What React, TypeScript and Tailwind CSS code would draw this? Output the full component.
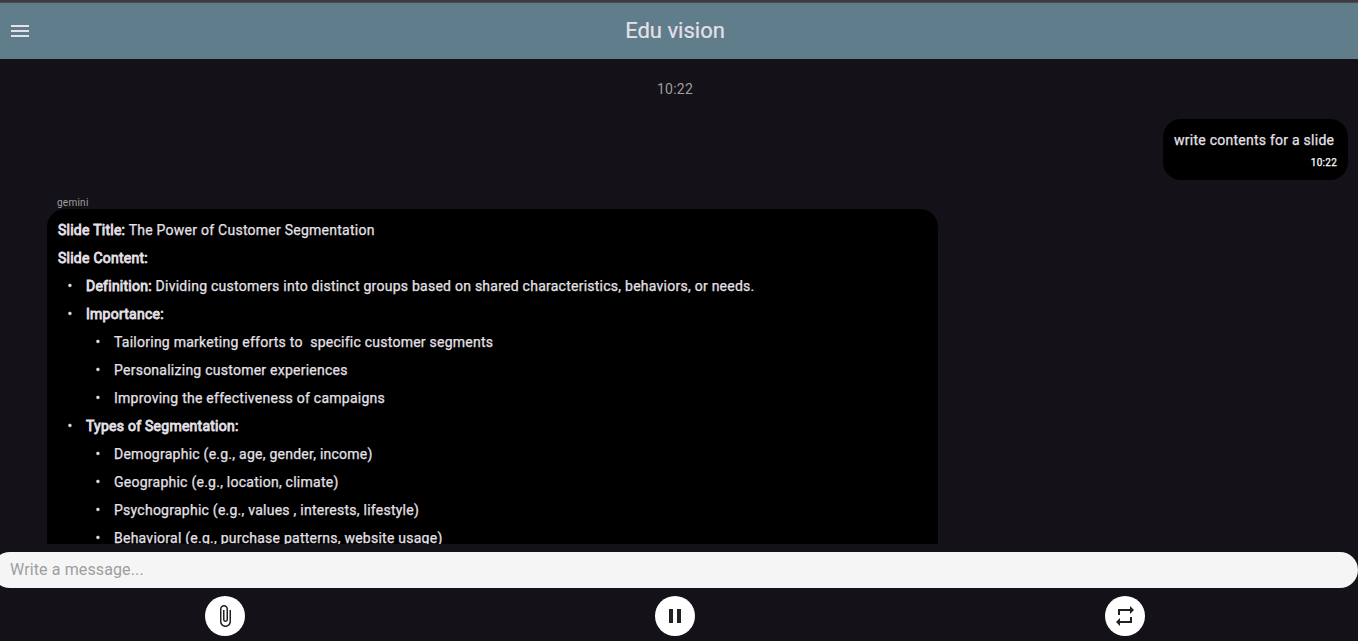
import type { ReactNode } from "react";

function Row({ level = 0, children }: { level?: 0 | 1 | 2; children: ReactNode }) {
  return (
    <div className={`flex h-5 shrink-0 items-center whitespace-pre ${level === 2 ? "pl-7" : ""}`}>
      {level > 0 && <span className="w-7 shrink-0 pr-1 text-center">•</span>}
      <span>{children}</span>
    </div>
  );
}

function Strong({ children }: { children: ReactNode }) {
  return <span className="tracking-[0.25px] [-webkit-text-stroke:0.8px_#e6e0e9]">{children}</span>;
}

function RoundButton({ label, children }: { label: string; children: ReactNode }) {
  return (
    <div className="flex w-[450px] justify-center">
      <button aria-label={label} className="flex size-10 items-center justify-center rounded-full bg-white text-[#212121]">
        {children}
      </button>
    </div>
  );
}

export default function App() {
  return (
    <div className="flex h-[641px] w-[1358px] flex-col overflow-hidden bg-[#141218] font-['Roboto',sans-serif] text-[#e6e0e9]">
      <div className="h-[3px] shrink-0 border-b border-[#4a4a48] bg-[#3c3c3c]" />
      <header className="flex h-14 shrink-0 items-center bg-[#607d8b]">
        <button aria-label="Menu" className="flex w-10 justify-center">
          <svg viewBox="0 0 24 24" className="size-6 fill-current">
            <path d="M3 18h18v-2H3v2zm0-5h18v-2H3v2zm0-7v2h18V6H3z" />
          </svg>
        </button>
        <h1 className="w-[1270px] text-center text-[22px] leading-7 [-webkit-text-stroke:0.2px_#e6e0e9]">Edu vision</h1>
      </header>

      <main className="flex h-[485px] shrink-0 flex-col overflow-hidden">
        <div className="mt-5 h-5 w-[1350px] shrink-0 text-center text-sm leading-5 tracking-[0.25px] text-[#9e9e9e]">10:22</div>
        <div className="mt-5 mr-[10px] flex h-[61px] w-[185px] shrink-0 flex-col self-end rounded-[18px] bg-black pt-[11px] pr-[11px] pl-[11px]">
          <div className="h-5 text-sm leading-5 whitespace-nowrap tracking-[0.25px] [-webkit-text-stroke:0.25px_#e6e0e9]">write contents for a slide</div>
          <div className="mt-[6px] text-right text-[10px] leading-[14px] tracking-[0.25px] text-white [-webkit-text-stroke:0.25px_#fff]">10:22</div>
        </div>
        <div className="mt-4 ml-[57px] h-[13px] shrink-0 text-[10px] leading-[14px] tracking-[0.25px] text-[#9e9e9e]">gemini</div>
        <section className="ml-[47px] flex h-[500px] w-[891px] shrink-0 flex-col gap-2 rounded-t-[18px] bg-black px-[11px] pt-[11px] text-sm leading-5 tracking-[0.25px] [-webkit-text-stroke:0.25px_#e6e0e9]">
          <Row><Strong>Slide Title:</Strong> The Power of Customer Segmentation</Row>
          <Row><Strong>Slide Content:</Strong></Row>
          <Row level={1}><Strong>Definition:</Strong> Dividing customers into distinct groups based on shared characteristics, behaviors, or needs.</Row>
          <Row level={1}><Strong>Importance:</Strong></Row>
          <Row level={2}>{"Tailoring marketing efforts to  specific customer segments"}</Row>
          <Row level={2}>Personalizing customer experiences</Row>
          <Row level={2}>Improving the effectiveness of campaigns</Row>
          <Row level={1}><Strong>Types of Segmentation:</Strong></Row>
          <Row level={2}>Demographic (e.g., age, gender, income)</Row>
          <Row level={2}>Geographic (e.g., location, climate)</Row>
          <Row level={2}>Psychographic (e.g., values , interests, lifestyle)</Row>
          <Row level={2}>Behavioral (e.g., purchase patterns, website usage)</Row>
        </section>
      </main>

      <div className="mt-2 -ml-2 h-9 w-[1366px] shrink-0 rounded-full bg-[#f5f5f5]">
        <input
          placeholder="Write a message..."
          className="h-[34px] w-full bg-transparent pl-[18px] text-base tracking-[0.12px] text-black outline-none placeholder:text-[#9e9e9e]"
        />
      </div>
      <footer className="mt-2 flex w-[1350px] shrink-0">
        <RoundButton label="Attach file">
          <svg viewBox="0 0 24 24" className="size-6 fill-current">
            <path d="M16.5 6v11.5c0 2.21-1.79 4-4 4s-4-1.79-4-4V5c0-1.38 1.12-2.5 2.5-2.5s2.5 1.12 2.5 2.5v10.5c0 .55-.45 1-1 1s-1-.45-1-1V6H10v9.500c0 1.380 1.120 2.500 2.500 2.500s2.500-1.120 2.500-2.500V5c0-2.210-1.790-4-4-4S7 2.790 7 5v12.500c0 3.040 2.460 5.500 5.500 5.500s5.500-2.460 5.500-5.500V6h-1.500z" />
          </svg>
        </RoundButton>
        <RoundButton label="Pause">
          <svg viewBox="0 0 24 24" className="size-6 fill-current">
            <path d="M6 19h4V5H6v14zm8-14v14h4V5h-4z" />
          </svg>
        </RoundButton>
        <RoundButton label="Repeat">
          <svg viewBox="0 0 24 24" className="size-6 fill-current">
            <path d="M7 7h10v3l4-4-4-4v3H5v6h2V7zm10 10H7v-3l-4 4 4 4v-3h12v-6h-2v4z" />
          </svg>
        </RoundButton>
      </footer>
    </div>
  );
}
